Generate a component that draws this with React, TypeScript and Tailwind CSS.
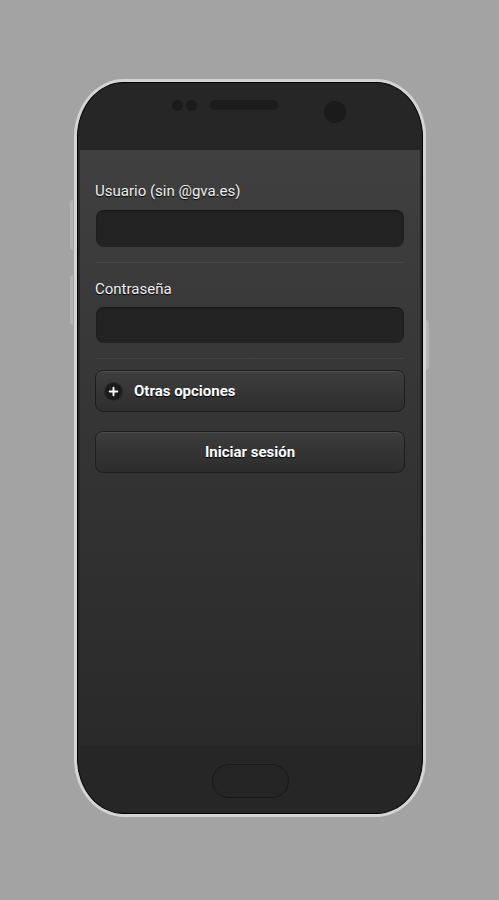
import { Plus } from 'lucide-react';

const App = () => {
  return (
    <div className="min-h-[900px] w-full bg-[#a3a3a3] pt-[79px] pl-[74px] font-['Roboto',sans-serif]">
      {/* phone */}
      <div className="relative w-[352px] h-[738px]">
        {/* side buttons */}
        <div className="absolute left-[-4px] top-[121px] h-[50px] w-[3px] rounded-l bg-[#b4b4b4]" />
        <div className="absolute left-[-4px] top-[196px] h-[50px] w-[3px] rounded-l bg-[#b4b4b4]" />
        <div className="absolute right-[-3px] top-[241px] h-[50px] w-[3px] rounded-r bg-[#b4b4b4]" />

        <div className="h-full w-full rounded-[50px/58px] bg-[#d4d4d4] p-[3px]">
          <div className="flex h-full flex-col overflow-hidden rounded-[47px/55px] border border-black bg-[#262626]">
            {/* top bezel */}
            <div className="flex h-[67px] shrink-0 items-start pl-[94px] pt-[16px]">
              <div className="mt-[1px] flex gap-[3px]">
                <div className="h-[11px] w-[11px] rounded-full bg-[#1b1b1b]" />
                <div className="h-[11px] w-[11px] rounded-full bg-[#1b1b1b]" />
              </div>
              <div className="ml-[13px] mt-[1px] h-[10px] w-[68px] rounded-full bg-[#1c1c1c]" />
              <div className="ml-[46px] mt-[2px] h-[22px] w-[22px] rounded-full bg-[#1b1b1b]" />
            </div>

            {/* screen */}
            <div className="mx-[2px] flex h-[595px] shrink-0 flex-col bg-gradient-to-b from-[#404040] via-[#343434] to-[#2a2a2a] px-[16px] pt-[31px]">
              <label className="ml-[-1px] text-[15px] leading-[20px] text-[#f0f0f0] [text-shadow:0_1px_1px_#000]">
                Usuario (sin @gva.es)
              </label>
              <div className="mt-[9px] h-[37px] rounded-[8px] bg-[#232323] shadow-[inset_0_1px_2px_rgba(0,0,0,0.4)]" />
              <div className="mt-[15px] h-px bg-[#484848]" />

              <label className="ml-[-1px] mt-[16px] text-[15px] leading-[20px] text-[#f0f0f0] [text-shadow:0_1px_1px_#000]">
                Contraseña
              </label>
              <div className="mt-[8px] h-[36px] rounded-[8px] bg-[#232323] shadow-[inset_0_1px_2px_rgba(0,0,0,0.4)]" />
              <div className="mt-[15px] h-px bg-[#444444]" />

              <button className="mx-[-1px] mt-[11px] flex h-[42px] items-center gap-[12px] rounded-[8px] border border-[#1d1d1d] bg-gradient-to-b from-[#3e3e3e] to-[#2e2e2e] px-[9px] text-[15px] font-bold text-white shadow-[inset_0_1px_0_#505050] [text-shadow:0_1px_1px_#000]">
                <span className="flex h-[17px] w-[17px] items-center justify-center rounded-full bg-[#1c1c1c] shadow-[0_0_0_1px_#2a2a2a]">
                  <Plus size={13} strokeWidth={3.5} className="text-white" />
                </span>
                Otras opciones
              </button>

              <button className="mx-[-1px] mt-[19px] flex h-[42px] items-center justify-center rounded-[8px] border border-[#1d1d1d] bg-gradient-to-b from-[#3c3c3c] to-[#2d2d2d] text-[15px] font-bold text-white shadow-[inset_0_1px_0_#4c4c4c] [text-shadow:0_1px_1px_#000]">
                Iniciar sesión
              </button>
            </div>

            {/* bottom bezel */}
            <div className="flex flex-1 justify-center pt-[19px]">
              <div className="h-[34px] w-[77px] rounded-full border border-[#181818] bg-[#252525]" />
            </div>
          </div>
        </div>
      </div>
    </div>
  );
};

export default App;
